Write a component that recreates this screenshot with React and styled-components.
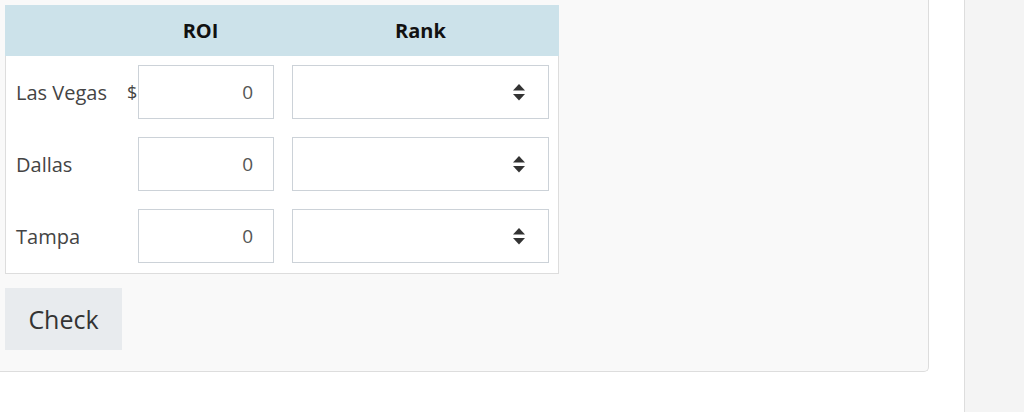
import React from "react";
import styled, { createGlobalStyle } from "styled-components";

const GlobalStyle = createGlobalStyle`
  html, body {
    margin: 0;
    padding: 0;
    background: #ffffff;
  }
  body {
    font-family: "Open Sans", "Noto Sans", sans-serif;
    color: #333;
  }
`;

const Page = styled.div`
  display: flex;
  height: 412px;
  overflow: hidden;
`;

const Main = styled.div`
  width: 964px;
  flex-shrink: 0;
`;

const Card = styled.div`
  width: 929px;
  background: #f9f9f9;
  border-right: 1px solid #dddddd;
  border-bottom: 1px solid #dddddd;
  border-bottom-right-radius: 5px;
  padding: 5px 0 21px 5px;
  box-sizing: border-box;
`;

const Sidebar = styled.aside`
  flex: 1;
  background: #f4f4f4;
  border-left: 1px solid #dddddd;
`;

const Table = styled.div`
  width: 554px;
  border: 1px solid #dddddd;
  border-top: none;
  background: #ffffff;
  padding-bottom: 1px;
  box-sizing: border-box;
`;

const Grid = styled.div`
  display: grid;
  grid-template-columns: 111px 165px 257px;
  align-items: center;
  padding: 0 9px 0 10px;
`;

const HeadRow = styled(Grid)`
  height: 51px;
  margin: 0 -1px;
  padding: 0 10px 0 11px;
  background: #cce2ea;
`;

const HeadCell = styled.div`
  font-size: 20px;
  font-weight: 700;
  color: #111;
  text-align: center;
  padding-right: ${(p) => (p.$gap ? "18px" : "0")};
`;

const BodyRow = styled(Grid)`
  height: 72px;
`;

const Label = styled.div`
  font-size: 20px;
  color: #444;
`;

const MoneyCell = styled.div`
  display: flex;
  align-items: center;
  padding-right: 18px;
`;

const Prefix = styled.span`
  width: 11px;
  font-size: 18px;
  color: #444;
`;

const NumberInput = styled.input`
  width: 136px;
  height: 54px;
  margin-left: ${(p) => (p.$indent ? "0" : "11px")};
  box-sizing: border-box;
  border: 1px solid #ccd2d8;
  background: #fff;
  font-family: inherit;
  font-size: 19px;
  color: #555;
  text-align: right;
  padding: 0 20px 0 8px;
  outline: none;
`;

const SelectBox = styled.div`
  height: 54px;
  box-sizing: border-box;
  border: 1px solid #ccd2d8;
  background: #fff;
  display: flex;
  align-items: center;
  justify-content: flex-end;
  padding-right: 23px;
`;

const Button = styled.button`
  margin-top: 14px;
  width: 117px;
  height: 62px;
  border: none;
  background: #e8ebee;
  font-family: inherit;
  font-size: 25px;
  color: #333;
  padding: 0;
  cursor: pointer;
`;

function SortIcon() {
  return (
    <svg width="12" height="17" viewBox="0 0 12 17">
      <path d="M6 0 L12 6.5 H0 Z" fill="#333" />
      <path d="M0 10 H12 L6 16.5 Z" fill="#333" />
    </svg>
  );
}

const cities = [
  { name: "Las Vegas", money: true },
  { name: "Dallas", money: false },
  { name: "Tampa", money: false },
];

export default function App() {
  return (
    <>
      <GlobalStyle />
      <Page>
        <Main>
          <Card>
            <Table>
              <HeadRow>
                <div />
                <HeadCell $gap>ROI</HeadCell>
                <HeadCell>Rank</HeadCell>
              </HeadRow>
              {cities.map((c) => (
                <BodyRow key={c.name}>
                  <Label>{c.name}</Label>
                  <MoneyCell>
                    {c.money && <Prefix>$</Prefix>}
                    <NumberInput $indent={c.money} defaultValue="0" />
                  </MoneyCell>
                  <SelectBox>
                    <SortIcon />
                  </SelectBox>
                </BodyRow>
              ))}
            </Table>
            <Button>Check</Button>
          </Card>
        </Main>
        <Sidebar />
      </Page>
    </>
  );
}
